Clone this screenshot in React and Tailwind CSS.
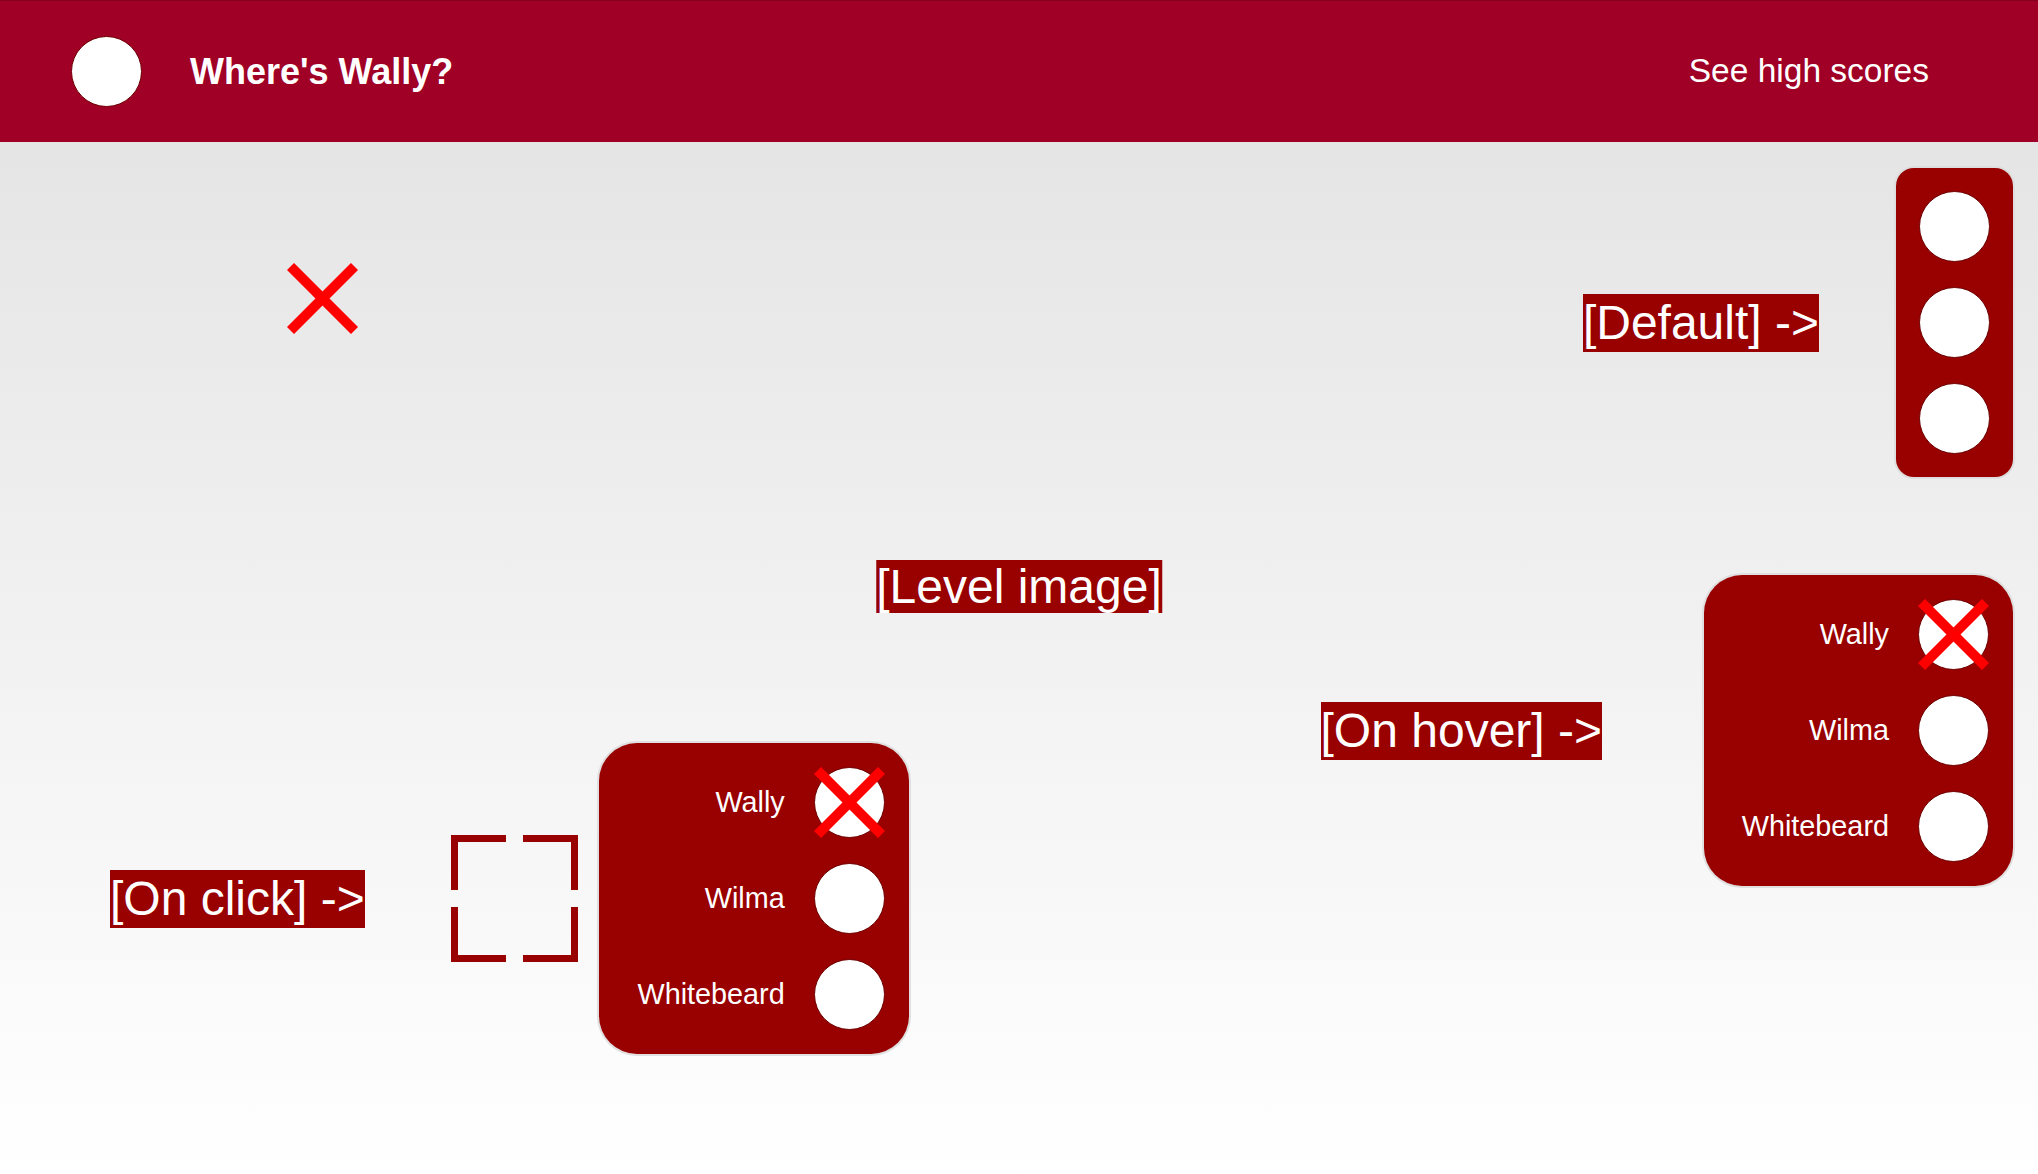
import React from 'react';

const font = { fontFamily: '"Liberation Sans", Arial, Helvetica, sans-serif' };

const Cross = ({ className = '' }) => (
  <svg width="71" height="71" viewBox="0 0 71 71" className={className}>
    <line x1="3.5" y1="3.5" x2="67.5" y2="67.5" stroke="#ff0000" strokeWidth="10" />
    <line x1="67.5" y1="3.5" x2="3.5" y2="67.5" stroke="#ff0000" strokeWidth="10" />
  </svg>
);

const Dot = ({ crossed }) => (
  <div className="relative w-[71px] h-[71px] shrink-0 rounded-full bg-white border border-[#6d0000]">
    {crossed && <Cross className="absolute -left-px -top-px" />}
  </div>
);

const Tag = ({ children }) => (
  <span className="bg-[#990000] text-white text-[48px] leading-[58px] whitespace-nowrap">{children}</span>
);

const characters = [
  { name: 'Wally', found: true },
  { name: 'Wilma', found: false },
  { name: 'Whitebeard', found: false },
];

const CharacterMenu = ({ width }) => (
  <div className={`flex flex-col gap-[25px] py-[24px] pr-[24px] rounded-[38px] bg-[#990000] ring-2 ring-[#e0e0e0] ${width}`}>
    {characters.map((c) => (
      <div key={c.name} className="flex items-center justify-end gap-[29px]">
        <span className="text-white text-[28.8px]">{c.name}</span>
        <Dot crossed={c.found} />
      </div>
    ))}
  </div>
);

const Target = () => (
  <div className="grid grid-cols-2 gap-[17px]">
    <div className="w-[55px] h-[55px] border-t-[7px] border-l-[7px] border-[#990000]" />
    <div className="w-[55px] h-[55px] border-t-[7px] border-r-[7px] border-[#990000]" />
    <div className="w-[55px] h-[55px] border-b-[7px] border-l-[7px] border-[#990000]" />
    <div className="w-[55px] h-[55px] border-b-[7px] border-r-[7px] border-[#990000]" />
  </div>
);

export default function App() {
  return (
    <div className="w-full min-h-screen flex flex-col" style={font}>
      <header className="h-[142px] flex items-center justify-between bg-[#a10026] border-t border-[#85001f] pl-[71px] pr-[109px]">
        <div className="flex items-center gap-[48px]">
          <div className="w-[71px] h-[71px] rounded-full bg-white border border-[#6d0000]" />
          <h1 className="text-white text-[36px] font-bold">Where's Wally?</h1>
        </div>
        <a className="text-white text-[33.5px] cursor-pointer">See high scores</a>
      </header>

      <main className="relative h-[1032px] flex justify-end items-start pr-[25px] pt-[26px] bg-gradient-to-b from-[#e5e5e5] to-[#ffffff]">
        {/* level image placeholder */}
        <div className="absolute top-[416px] left-1/2 -translate-x-1/2">
          <Tag>[Level image]</Tag>
        </div>

        {/* wrong guess marker */}
        <Cross className="absolute left-[287px] top-[121px]" />

        {/* on click: target + menu */}
        <div className="absolute left-[110px] top-[601px] flex items-center">
          <Tag>{'[On click] ->'}</Tag>
          <div className="ml-[86px] mr-[21px]">
            <Target />
          </div>
          <CharacterMenu width="w-[310px]" />
        </div>

        <div className="flex flex-col items-end gap-[98px]">
          <div className="flex items-center gap-[77px]">
            <Tag>{'[Default] ->'}</Tag>
            <div className="flex flex-col gap-[25px] p-[23px] rounded-[18px] bg-[#990000] ring-2 ring-[#dedede]">
              <Dot />
              <Dot />
              <Dot />
            </div>
          </div>
          <div className="flex items-center gap-[102px]">
            <Tag>{'[On hover] ->'}</Tag>
            <CharacterMenu width="w-[309px]" />
          </div>
        </div>
      </main>
    </div>
  );
}
